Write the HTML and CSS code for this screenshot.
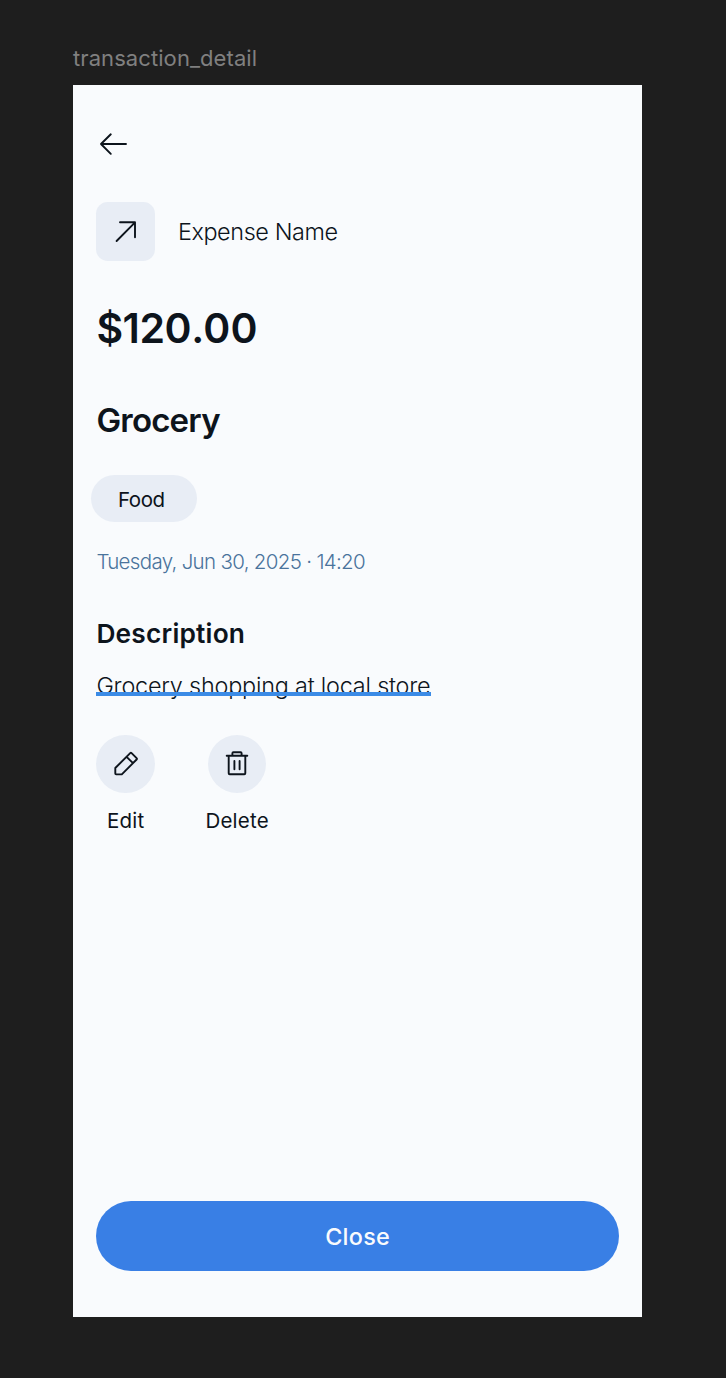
FILE: index.html
```html
<!DOCTYPE html>
<html lang="en">
<head>
<meta charset="utf-8">
<title>transaction_detail</title>
<link rel="stylesheet" href="styles.css">
</head>
<body>
<div class="frame-label"><span>transaction_detail</span></div>
<main class="screen">
  <svg class="back" viewBox="0 0 34 34"><path d="M30 17H5M14.8 7.3 5 17l9.8 9.8"/></svg>
  <div class="type-row">
    <div class="type-icon"><svg viewBox="0 0 32 32"><path d="M6.6 25 24.8 6.6M10 6.3H25V21.3"/></svg></div>
    <span class="type-name">Expense Name</span>
  </div>
  <div class="amount"><span>$120</span><span class="cents">.00</span></div>
  <h1 class="title"><span>Grocery</span></h1>
  <div class="tag"><span>Food</span></div>
  <div class="date"><span>Tuesday, Jun 30, 2025 · 14:20</span></div>
  <h2 class="subtitle"><span>Description</span></h2>
  <div class="description"><span>Grocery shopping at local store</span></div>
  <div class="actions">
    <div class="action">
      <div class="circle"><svg viewBox="0 0 32 32"><path d="M5.3 20 20.2 5.1a1 1 0 0 1 1.4 0l5 5a1 1 0 0 1 0 1.4L11.8 26.4H6.1a.8.8 0 0 1-.8-.8ZM16.6 8.8l6.4 6.4"/></svg></div>
      <span>Edit</span>
    </div>
    <div class="action">
      <div class="circle"><svg viewBox="0 0 32 32"><path d="M5.7 7.8H26.3M7.7 8V25.3a1 1 0 0 0 1 1H23.3a1 1 0 0 0 1-1V8M11.4 7.8V5.3a1 1 0 0 1 1-1h7.2a1 1 0 0 1 1 1V7.8M13.4 13V21.3M18.6 13V21.3"/></svg></div>
      <span>Delete</span>
    </div>
  </div>
  <button class="close"><span>Close</span></button>
</main>
</body>
</html>
```
FILE: styles.css
```css
* { box-sizing: border-box; }
body {
  margin: 0;
  height: 1378px;
  padding: 44px 84px 0 73px;
  background: #1e1e1e;
  color: #0d141c;
  font-family: Inter, "Liberation Sans", sans-serif;
}
span { white-space: nowrap; }
svg {
  display: block;
  fill: none;
  stroke: #0d141c;
  stroke-width: 1.9;
  stroke-linecap: round;
  stroke-linejoin: round;
}
.frame-label {
  height: 41px;
  line-height: 29px;
  font-size: 22px;
  letter-spacing: .08px;
  color: #808080;
}
.screen {
  display: flex;
  flex-direction: column;
  align-items: flex-start;
  width: 569px;
  height: 1232px;
  padding: 42px 23.4px 46px;
  background: #f9fbfd;
}
.back { width: 34px; height: 34px; }
.type-row { display: flex; align-items: center; gap: 23px; margin-top: 41.4px; }
.type-icon {
  display: grid;
  place-items: center;
  width: 58.5px;
  height: 58.5px;
  border-radius: 11.7px;
  background: #e8edf5;
}
.type-icon svg, .circle svg { width: 32px; height: 32px; }
.type-name { font-size: 23.4px; font-weight: 300; letter-spacing: -.4px; }
.amount { margin-top: 41px; height: 52px; line-height: 52px; font-size: 41px; font-weight: 600; letter-spacing: -.45px; }
.cents { letter-spacing: .2px; }
.title { margin: 45px 0 0; height: 42px; line-height: 42px; font-size: 33px; font-weight: 600; letter-spacing: -.8px; }
.tag {
  margin: 34px 0 0 -5.5px;
  width: 106.5px;
  height: 47px;
  padding-left: 27px;
  line-height: 49px;
  border-radius: 24px;
  background: #e8edf5;
  font-size: 20.5px;
  letter-spacing: -.4px;
}
.date { margin-top: 24px; height: 31px; line-height: 31px; font-size: 20.5px; font-weight: 300; letter-spacing: -.68px; color: #4a739c; }
.subtitle { margin: 40px 0 0; height: 34px; line-height: 34px; font-size: 26.3px; font-weight: 600; letter-spacing: .2px; }
.description { position: relative; margin-top: 17px; width: 334.5px; height: 36px; line-height: 36px; font-size: 23.4px; font-weight: 300; letter-spacing: -.2px; }
.description::after { content: ""; position: absolute; left: 0; right: 0; top: 24px; height: 4.5px; background: #3b8be6; }
.actions { display: flex; gap: 50.5px; margin-top: 31px; }
.action { display: flex; flex-direction: column; align-items: center; width: 63.5px; font-size: 20.5px; line-height: 30px; letter-spacing: .2px; }
.action:first-child { width: 58.5px; }
.circle { display: grid; place-items: center; width: 58.5px; height: 58.5px; border-radius: 50%; background: #e8edf5; margin-bottom: 13px; }
.close {
  width: 522.5px;
  height: 70px;
  margin-top: auto;
  padding: 0;
  border: 0;
  border-radius: 35px;
  background: #397fe5;
  color: #f9fbfd;
  font: 500 23.4px Inter, "Liberation Sans", sans-serif;
  letter-spacing: .3px;
}
```
